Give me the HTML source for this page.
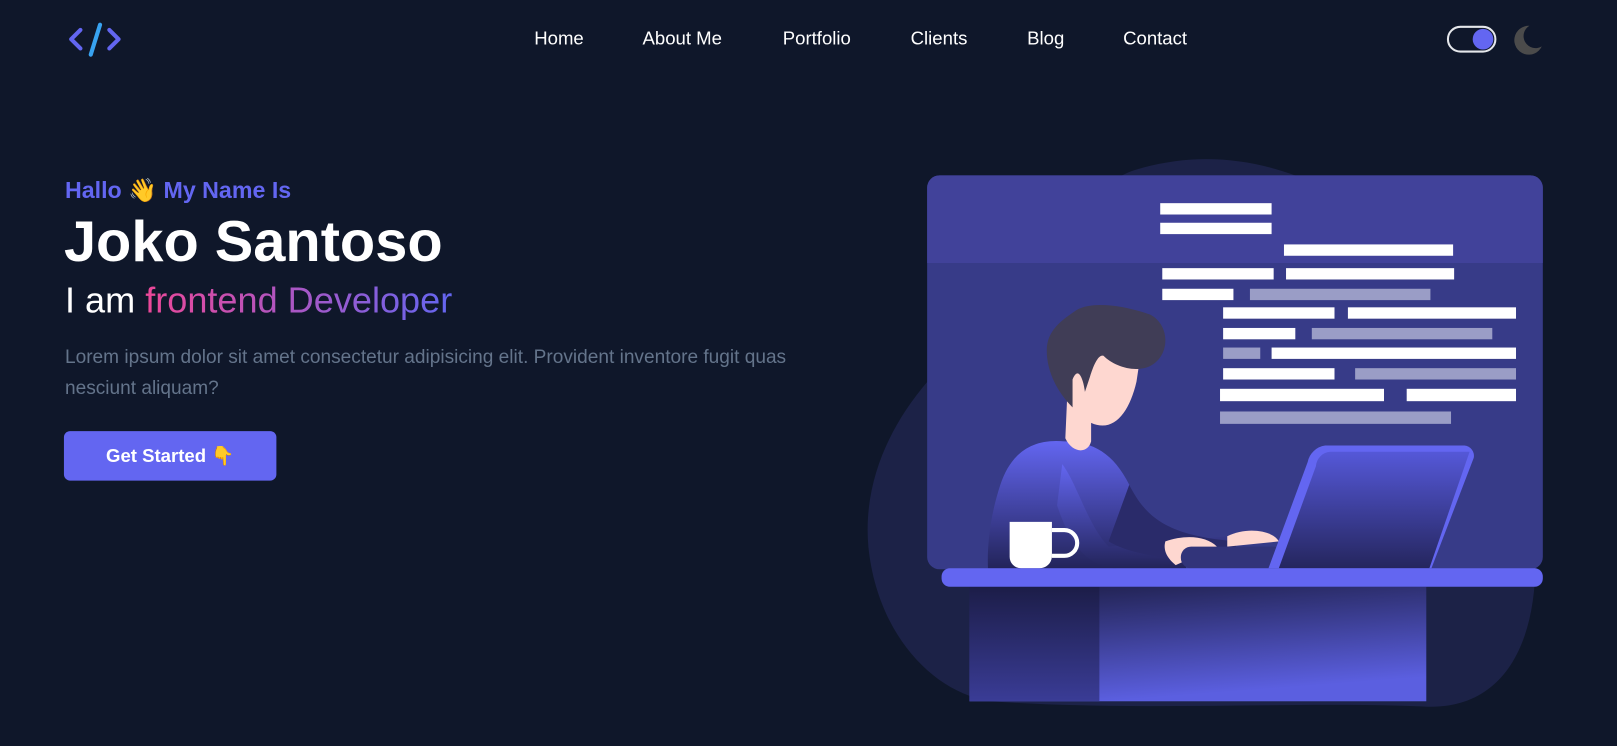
<!DOCTYPE html>
<html><head><meta charset="utf-8"><style>
*{margin:0;padding:0;box-sizing:border-box}
body{width:1617px;height:746px;background:#0f172a;font-family:"Liberation Sans",Arial,sans-serif;position:relative;overflow:hidden;color:#fff}
#w{position:absolute;left:0;top:0;width:1568px;height:723px;transform:scale(1.0313);transform-origin:0 0}
.nav a{position:absolute;top:27px;font-size:18px;color:#fff;text-decoration:none;line-height:20px}
.abs{position:absolute}
</style></head><body><div id="w">
<svg class="abs" style="left:64px;top:20px" width="56" height="40" viewBox="0 0 56 40">
<path d="M14 9 L5 18 L14 27" stroke="#6366f1" stroke-width="4" fill="none" stroke-linejoin="round" stroke-linecap="round"/>
<path d="M42 9 L51 18 L42 27" stroke="#6366f1" stroke-width="4" fill="none" stroke-linejoin="round" stroke-linecap="round"/>
<path d="M33 4 L24 33" stroke="#38a3f1" stroke-width="4" stroke-linecap="round"/>
</svg>
<div class="nav">
<a style="left:518px">Home</a><a style="left:623px">About Me</a><a style="left:759px">Portfolio</a><a style="left:883px">Clients</a><a style="left:996px">Blog</a><a style="left:1089px">Contact</a>
</div>
<div class="abs" style="left:1403px;top:25px;width:48px;height:26px;border:2px solid #e5e7eb;border-radius:13px"><div class="abs" style="left:23px;top:1px;width:20px;height:20px;border-radius:50%;background:#6366f1"></div></div>
<svg class="abs" style="left:1465px;top:23px" width="32" height="32" viewBox="0 0 32 32"><path d="M18 2 A14 14 0 1 0 30 22 A11 11 0 0 1 18 2Z" fill="#4b4b4b"/></svg>

<div class="abs" style="left:63px;top:172px;font-size:22.5px;font-weight:bold;color:#6366f1">Hallo 👋 My Name Is</div>
<div class="abs" style="left:62px;top:201px;font-size:56px;font-weight:bold;color:#fff;line-height:66px">Joko Santoso</div>
<div class="abs" style="left:63px;top:271px;font-size:35px;line-height:42px">I am <span style="background:linear-gradient(90deg,#ec4899,#6366f1);-webkit-background-clip:text;background-clip:text;color:transparent">frontend Developer</span></div>
<div class="abs" style="left:63px;top:331px;width:745px;font-size:18.5px;line-height:30px;color:#64748b">Lorem ipsum dolor sit amet consectetur adipisicing elit. Provident inventore fugit quas nesciunt aliquam?</div>
<div class="abs" style="left:62px;top:418px;width:206px;height:48px;background:#6366f1;border-radius:6px;font-size:18px;font-weight:bold;text-align:center;line-height:48px">Get Started 👇</div>

<svg class="abs" style="left:0;top:0" width="1568" height="723" viewBox="0 0 1568 723">
<defs>
<linearGradient id="desk" x1="0" y1="0" x2="0.3" y2="1"><stop offset="0" stop-color="#1e1f4a"/><stop offset="1" stop-color="#5b5fe0"/></linearGradient>
<linearGradient id="deskl" x1="0" y1="0" x2="0" y2="1"><stop offset="0" stop-color="#1c1d48"/><stop offset="1" stop-color="#3a3c96"/></linearGradient>
<linearGradient id="body" x1="0" y1="0" x2="0" y2="1"><stop offset="0" stop-color="#6366f1"/><stop offset="1" stop-color="#23245a"/></linearGradient>
<linearGradient id="lap" x1="0" y1="0" x2="0" y2="1"><stop offset="0" stop-color="#5558d8"/><stop offset="1" stop-color="#25265e"/></linearGradient>
</defs>
<path d="M1100 165 C1180 140 1260 160 1330 210 C1420 270 1480 400 1488 520 C1495 620 1460 690 1380 685 C1250 680 1100 690 960 680 C900 670 850 610 842 530 C835 450 880 380 940 330 C1000 280 1040 185 1100 165Z" fill="#1c2247"/>
<rect x="899" y="170" width="597" height="382" rx="12" fill="#373b88"/>
<path d="M911 170 H1484 A12 12 0 0 1 1496 182 V255 H899 V182 A12 12 0 0 1 911 170Z" fill="#41429a"/>
<g fill="#fff">
<rect x="1125" y="197" width="108" height="11"/><rect x="1125" y="216" width="108" height="11"/><rect x="1245" y="237" width="164" height="11"/>
<rect x="1127" y="260" width="108" height="11"/><rect x="1247" y="260" width="163" height="11"/><rect x="1127" y="280" width="69" height="11"/>
<rect x="1186" y="298" width="108" height="11"/><rect x="1307" y="298" width="163" height="11"/><rect x="1186" y="318" width="70" height="11"/>
<rect x="1233" y="337" width="237" height="11"/><rect x="1186" y="357" width="108" height="11"/><rect x="1183" y="377" width="159" height="12"/><rect x="1364" y="377" width="106" height="12"/>
</g>
<g fill="#9a9dc6">
<rect x="1212" y="280" width="175" height="11"/><rect x="1272" y="318" width="175" height="11"/><rect x="1186" y="337" width="36" height="11"/><rect x="1314" y="357" width="156" height="11"/><rect x="1183" y="399" width="224" height="12"/>
</g>
<path d="M1032 428 C1000 425 980 440 970 470 C960 500 957 530 958 551 H1150 L1150 530 C1120 520 1110 500 1095 470 C1080 440 1060 428 1032 428Z" fill="url(#body)"/>
<path d="M1030 450 C1045 470 1055 510 1075 530 L1140 525 L1190 520 L1190 545 L1080 551 C1050 548 1035 520 1025 490Z" fill="url(#body)"/>
<path d="M1095 470 C1110 500 1130 520 1200 525 L1195 540 C1150 545 1100 540 1075 525Z" fill="#2a2b6a"/>
<path d="M1130 525 C1150 518 1170 520 1180 530 L1140 548 C1130 540 1128 532 1130 525Z" fill="#fed7d0"/>
<path d="M1190 520 C1210 510 1235 515 1240 525 L1190 530Z" fill="#fed7d0"/>
<rect x="1145" y="530" width="100" height="21" rx="10" fill="#32347a"/>
<path d="M1035 380 L1033 425 C1040 440 1055 440 1058 428 L1058 410 C1080 420 1095 400 1102 370 L1108 330 L1050 330Z" fill="#fed7d0"/>
<path d="M1045 300 C1060 292 1090 296 1115 305 C1135 315 1135 345 1115 355 C1100 362 1080 355 1070 345 C1065 343 1060 355 1057 365 L1052 380 C1050 365 1045 355 1040 368 L1040 395 C1025 380 1015 360 1015 340 C1015 320 1030 310 1045 300Z" fill="#403d56"/>
<path d="M1285 432 H1420 A10 10 0 0 1 1429 444 L1388 551 H1230 L1268 448 A20 20 0 0 1 1285 432Z" fill="#6366f1"/>
<path d="M1290 438 H1425 L1386 551 H1240 L1276 452 A15 15 0 0 1 1290 438Z" fill="url(#lap)"/>
<path d="M979 506 H1020 V540 A12 12 0 0 1 1008 551 H990 A11 11 0 0 1 979 540Z" fill="#fff"/>
<path d="M1020 514 H1032 A10 10 0 0 1 1032 539 H1020" stroke="#fff" stroke-width="4" fill="none"/>
<rect x="940" y="569" width="443" height="111" fill="url(#desk)"/>
<rect x="940" y="569" width="126" height="111" fill="url(#deskl)"/>
<rect x="913" y="551" width="583" height="18" rx="8" fill="#6366f1"/>
</svg>
</div></body></html>
